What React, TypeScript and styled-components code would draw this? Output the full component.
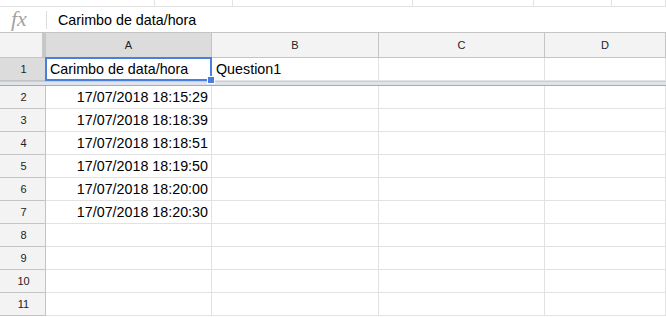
import React from "react";
import styled, { createGlobalStyle } from "styled-components";

const Global = createGlobalStyle`
  html, body { margin: 0; padding: 0; background: #fff; }
  body { font-family: "Liberation Sans", Arial, sans-serif; overflow: hidden; }
`;

const Page = styled.div`
  width: 666px;
  height: 317px;
  overflow: hidden;
  display: flex;
  flex-direction: column;
  background: #fff;
`;

const TopStrip = styled.div`
  height: 6px;
  display: flex;
  border-bottom: 1px solid #e3e3e3;
`;

const StripSeg = styled.div<{ $w?: number }>`
  ${(p) => (p.$w ? `width: ${p.$w}px;` : "flex: 1;")}
  border-right: 1px solid #e3e3e3;
  box-sizing: border-box;
`;

const FormulaBar = styled.div`
  height: 25px;
  display: flex;
  align-items: center;
  border-bottom: 1px solid #c4c4c4;
`;

const Fx = styled.div`
  width: 40px;
  padding-left: 11px;
  box-sizing: border-box;
  font-family: "Liberation Serif", "DejaVu Serif", serif;
  font-style: italic;
  font-size: 22px;
  color: #a3a3a3;
  line-height: 1;
  margin-top: -2px;
`;

const FxSep = styled.div`
  width: 1px;
  height: 18px;
  background: #dcdcdc;
  margin-left: 6px;
`;

const FormulaText = styled.div`
  padding-left: 11px;
  font-size: 14.3px;
  color: #000;
`;

const Sheet = styled.div`
  display: grid;
  grid-template-columns: 46px 166px 167px 166px 1fr;
  grid-template-rows: 25px 23px 5px repeat(10, 23px);
`;

const Corner = styled.div`
  background: #f3f3f3;
  border-right: 4px solid #c7c7c7;
  border-bottom: 1px solid #c4c4c4;
  box-sizing: border-box;
`;

const ColHead = styled.div<{ $sel?: boolean }>`
  background: ${(p) => (p.$sel ? "#dcdcdc" : "#f3f3f3")};
  border-right: 1px solid #c4c4c4;
  border-bottom: 1px solid #c4c4c4;
  box-sizing: border-box;
  display: flex;
  align-items: center;
  justify-content: center;
  font-size: 11px;
  color: #222;
`;

const RowHead = styled.div<{ $sel?: boolean }>`
  background: ${(p) => (p.$sel ? "#dcdcdc" : "#f3f3f3")};
  border-right: 1px solid #c4c4c4;
  border-bottom: 1px solid #c4c4c4;
  box-sizing: border-box;
  display: flex;
  align-items: center;
  justify-content: center;
  font-size: 11px;
  color: #222;
  padding-left: 2px;
`;

const Cell = styled.div<{ $right?: boolean }>`
  position: relative;
  border-right: 1px solid #e2e2e2;
  border-bottom: 1px solid #e2e2e2;
  box-sizing: border-box;
  display: flex;
  align-items: center;
  justify-content: ${(p) => (p.$right ? "flex-end" : "flex-start")};
  padding: 0 3px 0 4px;
  font-size: 14.3px;
  color: #000;
  white-space: nowrap;
`;

const Selection = styled.div`
  position: absolute;
  left: -1px;
  top: -1px;
  right: -1px;
  bottom: -1px;
  border: 2px solid #4a7fe0;
  pointer-events: none;
`;

const FillHandle = styled.div`
  position: absolute;
  right: -4px;
  bottom: -4px;
  width: 6px;
  height: 6px;
  background: #4a7fe0;
  border: 1px solid #fff;
  z-index: 2;
`;

const FreezeBar = styled.div`
  grid-column: 1 / -1;
  background: #dfe3ea;
  border-top: 1px solid #c9ced6;
  border-bottom: 1px solid #a9a9a9;
  box-sizing: border-box;
`;

const cols = ["A", "B", "C", "D"];
const data = [
  "17/07/2018 18:15:29",
  "17/07/2018 18:18:39",
  "17/07/2018 18:18:51",
  "17/07/2018 18:19:50",
  "17/07/2018 18:20:00",
  "17/07/2018 18:20:30",
  "",
  "",
  "",
  "",
];

export default function App() {
  return (
    <Page>
      <Global />
      <TopStrip>
        <StripSeg $w={155} />
        <StripSeg $w={78} />
        <StripSeg $w={180} />
        <StripSeg $w={121} />
        <StripSeg $w={78} />
        <StripSeg />
      </TopStrip>
      <FormulaBar>
        <Fx>fx</Fx>
        <FxSep />
        <FormulaText>Carimbo de data/hora</FormulaText>
      </FormulaBar>
      <Sheet>
        <Corner />
        {cols.map((c, i) => (
          <ColHead key={c} $sel={i === 0}>
            {c}
          </ColHead>
        ))}
        <RowHead $sel>1</RowHead>
        <Cell>
          Carimbo de data/hora
          <Selection />
          <FillHandle />
        </Cell>
        <Cell>Question1</Cell>
        <Cell />
        <Cell />
        <FreezeBar />
        {data.map((d, i) => (
          <React.Fragment key={i}>
            <RowHead>{i + 2}</RowHead>
            <Cell $right>{d}</Cell>
            <Cell />
            <Cell />
            <Cell />
          </React.Fragment>
        ))}
      </Sheet>
    </Page>
  );
}
